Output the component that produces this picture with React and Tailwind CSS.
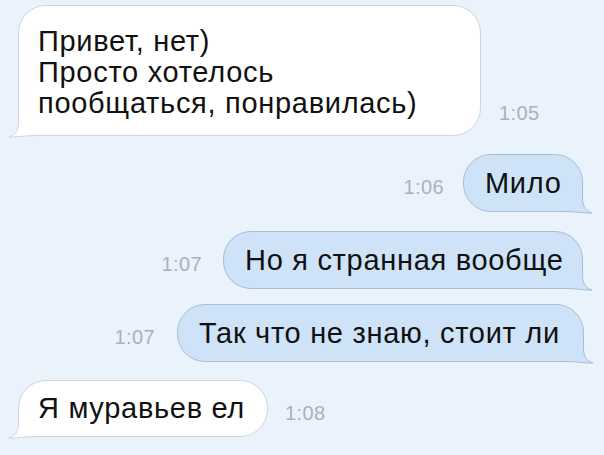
import React from 'react';

const font = { fontFamily: '"Liberation Sans", Arial, sans-serif' };

// хвостик пузыря, рисуется поверх нижнего угла
function Tail({ out }) {
  const fill = out ? '#cee2f8' : '#ffffff';
  const stroke = out ? '#a9bdd3' : '#cfd5dc';
  const d = 'M10.5,2 L10.5,18 C10.5,27 7,31 1,33 C7,33.5 16,31.5 30,31.5 L40,31.5';
  return (
    <svg
      width="40"
      height="34"
      viewBox="0 0 40 34"
      className={out ? 'absolute right-[-11px] bottom-[-3px] -scale-x-100' : 'absolute left-[-11px] bottom-[-3px]'}
    >
      <path d={d + ' L40,2 Z'} fill={fill} />
      <path d={d} fill="none" stroke={stroke} strokeWidth="1" />
    </svg>
  );
}

function Time({ children, className = '' }) {
  return <span className={`text-[20px] leading-none tracking-[0.4px] text-[#aab1ba] ${className}`}>{children}</span>;
}

function Incoming({ children, width, className = '' }) {
  return (
    <div
      className={`relative rounded-[28px] border border-[#cfd5dc] bg-white text-[29px] leading-[31px] tracking-[0.7px] text-[#111] ${className}`}
      style={{ width }}
    >
      <Tail />
      <div className="relative">{children}</div>
    </div>
  );
}

function Outgoing({ children, width }) {
  return (
    <div
      className="relative rounded-[28px] border border-[#a9bdd3] bg-[#cee2f8] py-3 pl-[21px] text-[29px] leading-[32px] tracking-[0.7px] text-[#111]"
      style={{ width }}
    >
      <Tail out />
      <div className="relative whitespace-nowrap">{children}</div>
    </div>
  );
}

export default function App() {
  return (
    <div className="flex h-[455px] w-[604px] flex-col overflow-hidden bg-[#eaf2fb] pt-[5px]" style={font}>
      <div className="flex items-end pl-[18px]">
        <Incoming width={463} className="pt-[20px] pb-[16px] pl-[19px]">
          <div>Привет, нет)</div>
          <div>Просто хотелось</div>
          <div>пообщаться, понравилась)</div>
        </Incoming>
        <Time className="mb-[13px] ml-[18px]">1:05</Time>
      </div>

      <div className="mt-[18px] flex items-center justify-end pr-[21px]">
        <Time className="mt-2 mr-[19px]">1:06</Time>
        <Outgoing width={120}>Мило</Outgoing>
      </div>

      <div className="mt-[19px] flex items-center justify-end pr-[21px]">
        <Time className="mt-2 mr-[21px]">1:07</Time>
        <Outgoing width={360}>Но я странная вообще</Outgoing>
      </div>

      <div className="mt-[15px] flex items-center justify-end pr-[20px]">
        <Time className="mt-2 mr-[22px]">1:07</Time>
        <Outgoing width={407}>Так что не знаю, стоит ли</Outgoing>
      </div>

      <div className="mt-[18px] flex items-center pl-[18px]">
        <Incoming width={250} className="py-3 pl-[19px]">
          <div className="whitespace-nowrap">Я муравьев ел</div>
        </Incoming>
        <Time className="mt-2 ml-[17px]">1:08</Time>
      </div>
    </div>
  );
}
